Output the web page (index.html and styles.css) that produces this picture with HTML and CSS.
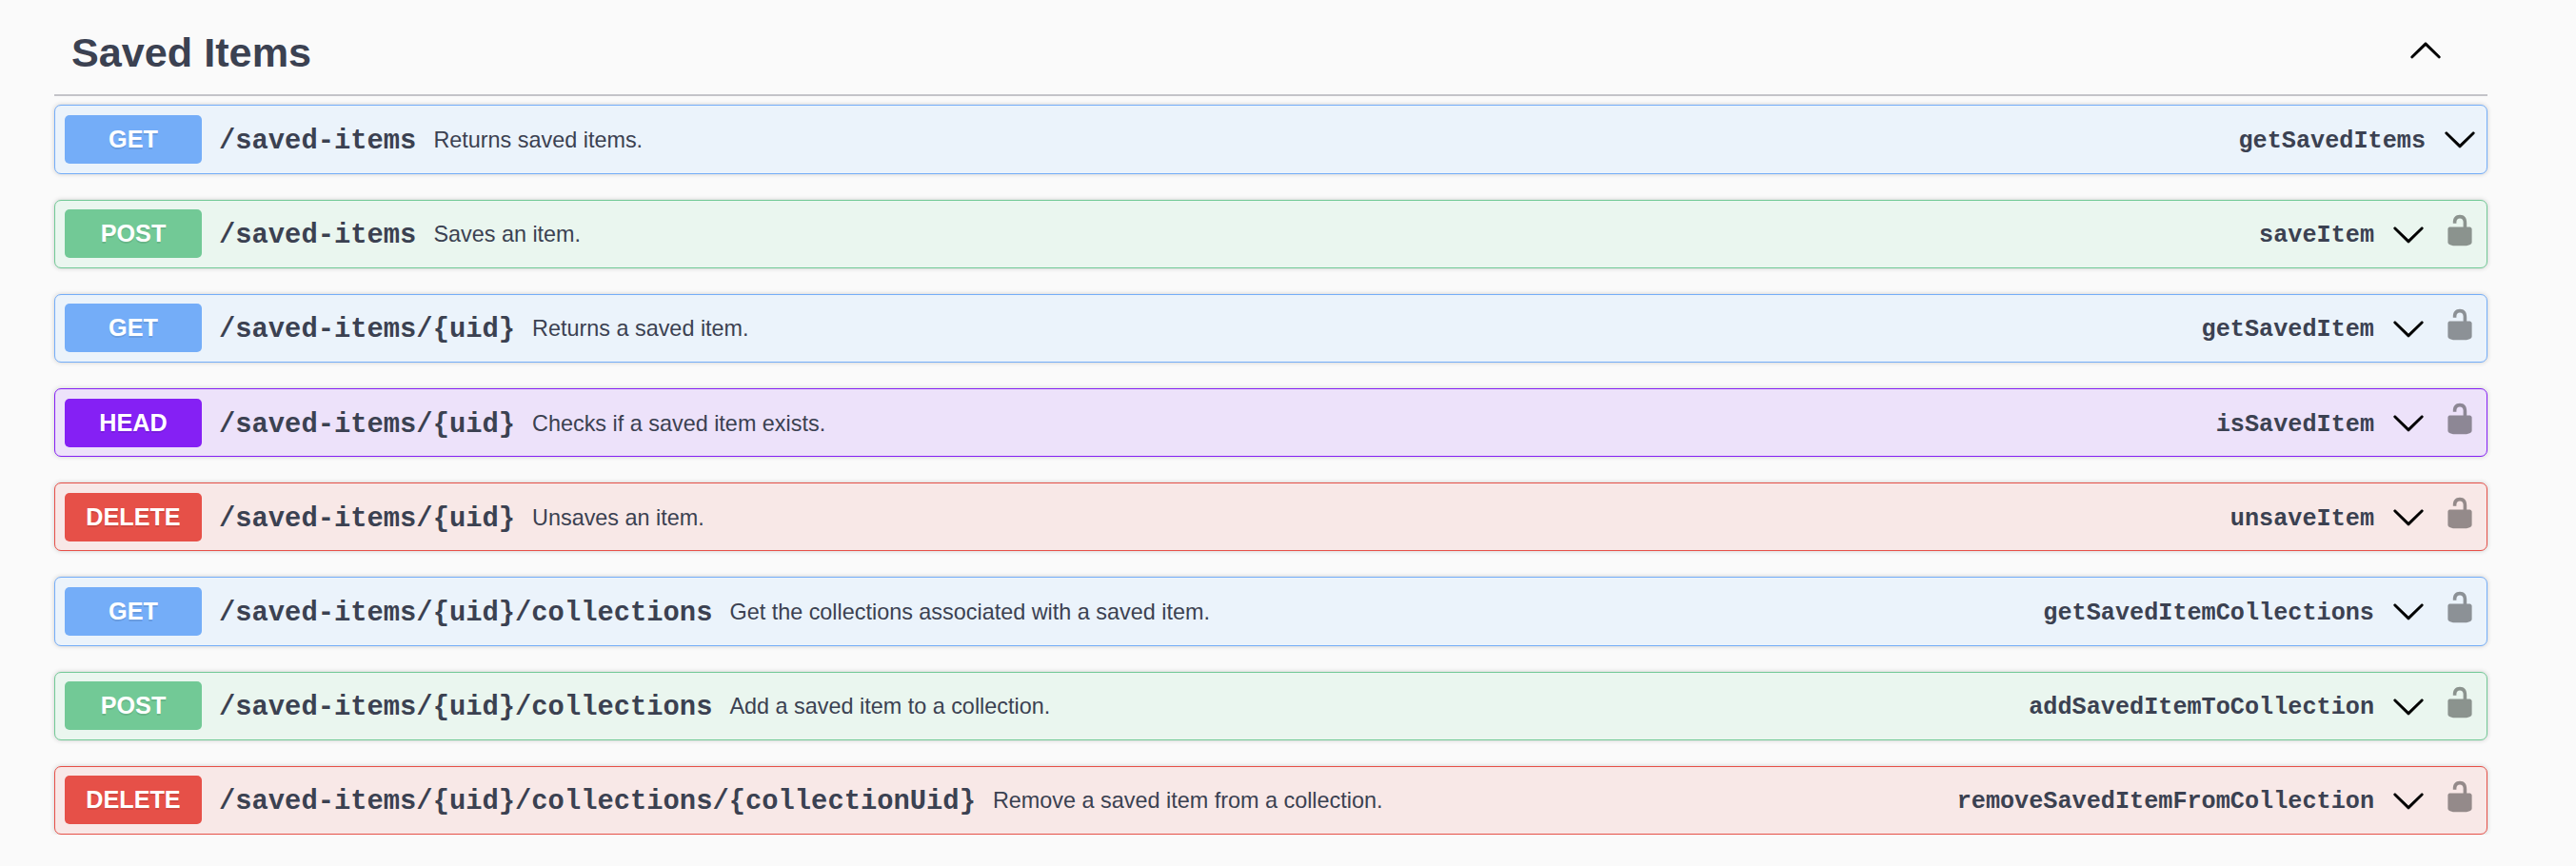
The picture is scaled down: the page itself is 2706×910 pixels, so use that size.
FILE: index.html
```
<!DOCTYPE html>
<html lang="en">
<head>
<meta charset="utf-8">
<title>Saved Items</title>
<link rel="stylesheet" href="styles.css">
</head>
<body>
<svg class="sprite" aria-hidden="true">
  <symbol id="down" viewBox="0 0 20 20"><path d="M17.418 6.109c.272-.268.709-.268.979 0s.271.701 0 .969l-7.908 7.83c-.27.268-.707.268-.979 0l-7.908-7.83c-.27-.268-.27-.701 0-.969.271-.268.709-.268.979 0L10 13.25l7.418-7.141z"/></symbol>
  <symbol id="up" viewBox="0 0 20 20"><path d="M17.418 14.908c.272.268.709.268.979 0s.271-.701 0-.969l-7.908-7.83c-.27-.268-.707-.268-.979 0l-7.908 7.83c-.27.268-.27.701 0 .969.271.268.709.268.979 0L10 7.767l7.418 7.141z"/></symbol>
  <symbol id="unlocked" viewBox="0 0 20 20"><path d="M15.8 8H14V5.6C14 2.703 12.665 1 10 1 7.334 1 6 2.703 6 5.6V6h2v-.801C8 3.754 8.797 3 10 3c1.203 0 2 .754 2 2.199V8H4c-.553 0-1 .646-1 1.199V17c0 .549.428 1.139.951 1.307l1.197.387C5.672 18.861 6.55 19 7.1 19h5.8c.549 0 1.428-.139 1.951-.307l1.196-.387c.524-.167.953-.757.953-1.306V9.199C17 8.646 16.352 8 15.8 8z"/></symbol>
</svg>
<main class="section">
  <header class="section-header">
    <h1 class="section-title">Saved Items</h1>
    <svg class="icon arrow"><use href="#up"/></svg>
  </header>
  <div class="operations">
    <div class="op get"><span class="method">GET</span><span class="path">/saved-items</span><span class="summary">Returns saved items.</span><span class="op-id">getSavedItems</span><svg class="icon arrow"><use href="#down"/></svg></div>
    <div class="op post"><span class="method">POST</span><span class="path">/saved-items</span><span class="summary">Saves an item.</span><span class="op-id">saveItem</span><svg class="icon arrow"><use href="#down"/></svg><svg class="icon lock"><use href="#unlocked"/></svg></div>
    <div class="op get"><span class="method">GET</span><span class="path">/saved-items/{uid}</span><span class="summary">Returns a saved item.</span><span class="op-id">getSavedItem</span><svg class="icon arrow"><use href="#down"/></svg><svg class="icon lock"><use href="#unlocked"/></svg></div>
    <div class="op head"><span class="method">HEAD</span><span class="path">/saved-items/{uid}</span><span class="summary">Checks if a saved item exists.</span><span class="op-id">isSavedItem</span><svg class="icon arrow"><use href="#down"/></svg><svg class="icon lock"><use href="#unlocked"/></svg></div>
    <div class="op delete"><span class="method">DELETE</span><span class="path">/saved-items/{uid}</span><span class="summary">Unsaves an item.</span><span class="op-id">unsaveItem</span><svg class="icon arrow"><use href="#down"/></svg><svg class="icon lock"><use href="#unlocked"/></svg></div>
    <div class="op get"><span class="method">GET</span><span class="path">/saved-items/{uid}/collections</span><span class="summary">Get the collections associated with a saved item.</span><span class="op-id">getSavedItemCollections</span><svg class="icon arrow"><use href="#down"/></svg><svg class="icon lock"><use href="#unlocked"/></svg></div>
    <div class="op post"><span class="method">POST</span><span class="path">/saved-items/{uid}/collections</span><span class="summary">Add a saved item to a collection.</span><span class="op-id">addSavedItemToCollection</span><svg class="icon arrow"><use href="#down"/></svg><svg class="icon lock"><use href="#unlocked"/></svg></div>
    <div class="op delete"><span class="method">DELETE</span><span class="path">/saved-items/{uid}/collections/{collectionUid}</span><span class="summary">Remove a saved item from a collection.</span><span class="op-id">removeSavedItemFromCollection</span><svg class="icon arrow"><use href="#down"/></svg><svg class="icon lock"><use href="#unlocked"/></svg></div>
  </div>
</main>
</body>
</html>
```
FILE: styles.css
```
* {
  box-sizing: border-box;
}

body {
  margin: 0;
  background: #fafafa;
  color: #3b4151;
  font-family: "Liberation Sans", Arial, sans-serif;
}

.sprite {
  display: none;
}

.section {
  width: 2556px;
  margin-left: 57px;
}

.section-header {
  display: flex;
  align-items: center;
  justify-content: space-between;
  height: 101px;
  padding: 5px 47px 0 18px;
  border-bottom: 2px solid #c3c3c8;
}

.section-title {
  margin: 6px 0 0;
  font-size: 43.2px;
  line-height: 50px;
}

.operations {
  display: flex;
  flex-direction: column;
  gap: 27px;
  padding-top: 9.4px;
}

.op {
  display: flex;
  align-items: center;
  height: 72.2px;
  padding: 0 10px;
  border: 1px solid var(--tone);
  border-radius: 7px;
  background: var(--tint);
  box-shadow: 0 0 5.4px rgba(0, 0, 0, 0.19);
  white-space: nowrap;
}

.get {
  --tone: #74adf8;
  --tint: #ebf3fb;
}

.post {
  --tone: #72c996;
  --tint: #eaf6ef;
}

.head {
  --tone: #8520f4;
  --tint: #ede2fa;
}

.delete {
  --tone: #e65048;
  --tint: #f8e8e7;
}

.method {
  width: 144px;
  height: 51px;
  border-radius: 5px;
  background: var(--tone);
  color: #fff;
  font-size: 25.2px;
  font-weight: 700;
  line-height: 50px;
  text-align: center;
  text-shadow: 0 1.8px 0 rgba(0, 0, 0, 0.1);
}

.path {
  margin: 4px 18px 0;
  font-family: "Liberation Mono", monospace;
  font-size: 28.8px;
  font-weight: 700;
}

.summary {
  flex: 1;
  margin-top: 2px;
  font-size: 23.4px;
}

.op-id {
  margin: 4px 18px 0 0;
  font-family: "Liberation Mono", monospace;
  font-size: 25.2px;
  font-weight: 700;
}

.icon {
  flex: none;
  width: 36px;
  height: 36px;
  fill: #000;
}

.arrow {
  stroke: #000;
  stroke-width: 0.25px;
}

.lock {
  margin: 0 0 8px 18px;
  opacity: 0.4;
}
```
